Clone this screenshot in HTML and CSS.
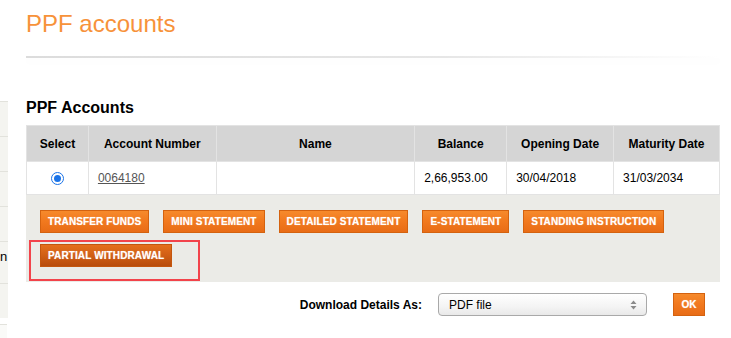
FILE: index.html
```html
<!DOCTYPE html>
<html>
<head>
<meta charset="utf-8">
<link rel="stylesheet" href="styles.css">
</head>
<body>
<div class="page">
  <aside class="side">
    <div class="side-item"></div>
    <div class="side-item"></div>
    <div class="side-item"></div>
    <div class="side-item"></div>
    <div class="side-item side-text">n</div>
    <div class="side-item"></div>
    <div class="side-item side-last"></div>
  </aside>
  <main class="main">
    <h1 class="title">PPF accounts</h1>
    <div class="rule"></div>
    <h2 class="section">PPF Accounts</h2>
    <table class="grid">
      <thead>
        <tr>
          <th class="c-sel">Select</th>
          <th class="c-acc">Account Number</th>
          <th class="c-name">Name</th>
          <th class="c-bal">Balance</th>
          <th class="c-open">Opening Date</th>
          <th class="c-mat">Maturity Date</th>
        </tr>
      </thead>
      <tbody>
        <tr>
          <td class="center"><span class="radio"><span class="dot"></span></span></td>
          <td><a class="acc-link" href="#">0064180</a></td>
          <td></td>
          <td>2,66,953.00</td>
          <td>30/04/2018</td>
          <td>31/03/2034</td>
        </tr>
      </tbody>
    </table>
    <div class="actions">
      <div class="btn-row">
        <button class="btn">TRANSFER FUNDS</button>
        <button class="btn">MINI STATEMENT</button>
        <button class="btn">DETAILED STATEMENT</button>
        <button class="btn">E-STATEMENT</button>
        <button class="btn">STANDING INSTRUCTION</button>
      </div>
      <div class="btn-row">
        <span class="highlight"><button class="btn btn-active">PARTIAL WITHDRAWAL</button></span>
      </div>
    </div>
    <div class="download">
      <span class="dl-label">Download Details As:</span>
      <div class="fake-select">
        <span>PDF file</span>
        <svg class="arrows" width="7" height="10" viewBox="0 0 7 10"><path d="M3.5 0.5 L6.5 4 H0.5 Z M3.5 9.5 L6.5 6 H0.5 Z" fill="#8a8a8a"/></svg>
      </div>
      <button class="btn btn-ok">OK</button>
    </div>
  </main>
</div>
</body>
</html>
```
FILE: styles.css
```css
* { box-sizing: border-box; }
html, body { margin: 0; padding: 0; background: #fff; }
body {
  font-family: "Liberation Sans", Arial, sans-serif;
  color: #000;
  width: 731px;
  height: 338px;
  overflow: hidden;
}
.page {
  display: flex;
  position: relative;
}
.side {
  width: 8px;
  padding-top: 101px;
  display: flex;
  flex-direction: column;
  flex-shrink: 0;
}
.side-item {
  height: 35px;
  background: #f4f4f0;
  border-top: 1px solid #e2e2dc;
  font-size: 13px;
}
.side-text {
  height: 42px;
  line-height: 30px;
  padding-left: 0;
}
.side-last {
  width: 7px;
  height: 30px;
  background: #fafaf8;
  margin-top: 6px;
}
.main {
  margin-left: 18px;
  width: 694px;
}
.title {
  margin: 0;
  padding-top: 10px;
  font-size: 24px;
  font-weight: normal;
  line-height: 28px;
  color: #f7923a;
}
.rule {
  margin-top: 18px;
  height: 2px;
  background: linear-gradient(to right, #dcdcdc 0%, #e6e6e6 60%, rgba(230,230,230,0) 100%);
  box-shadow: 0 4px 6px rgba(0,0,0,0.03);
}
.section {
  margin: 40px 0 0;
  font-size: 16px;
  line-height: 20px;
  font-weight: bold;
}
.grid {
  margin-top: 7px;
  width: 694px;
  border-collapse: collapse;
  font-size: 12px;
}
.grid th, .grid td {
  border: 1px solid #e3e3e3;
}
.grid th {
  background: #d5d5d5;
  height: 36px;
  font-weight: bold;
  text-align: center;
  padding: 0;
}
.grid td {
  height: 33px;
  background: #fff;
  padding: 0 9px;
}
.c-sel { width: 62px; }
.c-acc { width: 128px; }
.c-name { width: 199px; }
.c-bal { width: 92px; }
.c-open { width: 107px; }
.c-mat { width: 106px; }
.center { text-align: center; }
.radio {
  display: inline-block;
  width: 13px;
  height: 13px;
  border-radius: 50%;
  border: 1px solid #1a73e8;
  background: #fff;
  vertical-align: middle;
  padding: 2px;
}
.dot {
  display: block;
  width: 7px;
  height: 7px;
  border-radius: 50%;
  background: #1a73e8;
}
.acc-link {
  color: #555;
  text-decoration: underline;
}
.actions {
  background: #ebebe7;
  padding: 15px 14px 15px;
  display: flex;
  flex-direction: column;
  gap: 11px;
}
.btn-row {
  display: flex;
  gap: 14px;
}
.btn {
  font-family: "Liberation Sans", Arial, sans-serif;
  font-size: 10px;
  font-weight: bold;
  color: #fff;
  text-shadow: 0 0 1px rgba(255,255,255,0.6);
  height: 23px;
  padding: 0 7px;
  letter-spacing: 0.12px;
  border: 1px solid #d4620f;
  background: linear-gradient(to bottom, #f68a2c 0%, #f27a1f 45%, #e86c16 100%);
  cursor: pointer;
}
.btn-active {
  background: linear-gradient(to bottom, #e46f1c 0%, #d05e14 50%, #b84c0c 100%);
  border-color: #c4560e;
}
.highlight {
  position: relative;
  display: inline-block;
}
.highlight::after {
  content: "";
  position: absolute;
  left: -11px;
  top: -4px;
  width: 167px;
  height: 37px;
  border: 2px solid #f2434b;
  pointer-events: none;
}
.download {
  display: flex;
  align-items: center;
  justify-content: flex-end;
  padding: 11px 15px 0 0;
}
.dl-label {
  font-size: 12px;
  font-weight: bold;
  margin-right: 16px;
}
.fake-select {
  width: 209px;
  height: 23px;
  border: 1px solid #a9a9a9;
  border-radius: 4px;
  background: linear-gradient(to bottom, #ffffff 0%, #f4f4f4 60%, #e9e9e9 100%);
  display: flex;
  align-items: center;
  justify-content: space-between;
  padding: 0 9px 0 10px;
  font-size: 12px;
}
.btn-ok {
  margin-left: 26px;
  width: 32px;
  padding: 0;
  font-size: 10px;
  letter-spacing: 0;
}
```
